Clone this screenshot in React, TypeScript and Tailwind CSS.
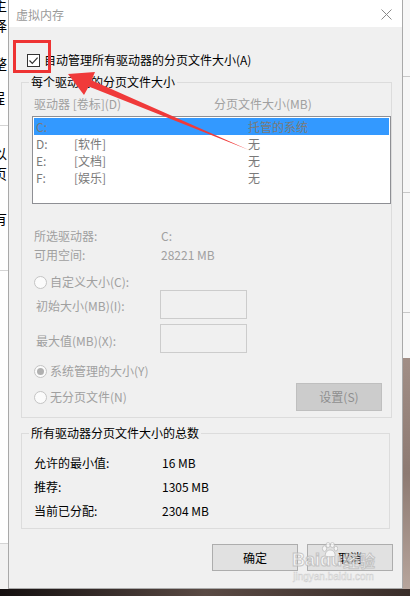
import React from "react";

const font = "font-['Noto_Sans_CJK_SC','Microsoft_YaHei',sans-serif]";

const drives = [
  { letter: "C:", label: "", size: "托管的系统", selected: true },
  { letter: "D:", label: "[软件]", size: "无", selected: false },
  { letter: "E:", label: "[文档]", size: "无", selected: false },
  { letter: "F:", label: "[娱乐]", size: "无", selected: false },
];

const totals = [
  { label: "允许的最小值:", value: "16 MB" },
  { label: "推荐:", value: "1305 MB" },
  { label: "当前已分配:", value: "2304 MB" },
];

const Radio: React.FC<{ checked?: boolean; label: string }> = ({ checked, label }) => (
  <div className="flex items-center h-[16px]">
    <span className="w-[13px] h-[13px] rounded-full border border-[#c4c4c4] bg-[#fbfbfb] flex items-center justify-center">
      {checked && <span className="w-[7px] h-[7px] rounded-full bg-[#b0b0b0]" />}
    </span>
    <span className="ml-[3px] text-[#a0a0a0]">{label}</span>
  </div>
);

const GroupBox: React.FC<{ title: string; className?: string; children: React.ReactNode }> = ({
  title,
  className,
  children,
}) => (
  <fieldset className={`border border-[#dcdcdc] ${className ?? ""}`}>
    <legend className="ml-[7px] px-[2px] leading-[16px] text-black">{title}</legend>
    {children}
  </fieldset>
);

const VirtualMemory: React.FC = () => {
  return (
    <div className="w-[395px] h-[589px] shrink-0 bg-[#f0f0f0] border-x border-b border-[#a9a9a9] flex flex-col">
      {/* title bar */}
      <div className="h-[27px] bg-white flex items-center justify-between pl-[7px] pr-[10px]">
        <span className="text-[12px] leading-[16px] text-[#9a9a9a] mt-[2px]">虚拟内存</span>
        <svg width="11" height="11" viewBox="0 0 11 11" className="mt-[1px]">
          <path d="M0.5 0.5 L10.5 10.5 M10.5 0.5 L0.5 10.5" stroke="#8a8a8a" strokeWidth="1" />
        </svg>
      </div>

      <div className="px-[12px] text-[12px] leading-[16px]">
        {/* auto manage checkbox */}
        <div className="mt-[25px] h-[16px] pl-[6px] flex items-center">
          <span className="w-[13px] h-[13px] border border-[#333333] bg-white flex items-center justify-center">
            <svg width="11" height="11" viewBox="0 0 11 11">
              <path d="M1.5 5.5 L4.3 8.3 L9.6 2.6" fill="none" stroke="#333333" strokeWidth="1.2" />
            </svg>
          </span>
          <span className="ml-[4px] text-black">自动管理所有驱动器的分页文件大小(A)</span>
        </div>

        <GroupBox title="每个驱动器的分页文件大小" className="mt-[6px] pb-[6px]">
          <div className="mt-[6px] h-[16px] flex text-[#a0a0a0]">
            <span className="ml-[12px] w-[180px]">驱动器 [卷标](D)</span>
            <span>分页文件大小(MB)</span>
          </div>
          <div className="mt-[4px] ml-[10px] w-[359px] h-[88px] border border-[#8e8f94] bg-white p-[1px]">
            {drives.map((d) => (
              <div
                key={d.letter}
                className={`h-[17px] flex items-center text-[#7a7a7a] ${d.selected ? "bg-[#3399ff]" : ""}`}
              >
                <span className="ml-[2px] w-[38px]">{d.letter}</span>
                <span className="w-[174px]">{d.label}</span>
                <span>{d.size}</span>
              </div>
            ))}
          </div>

          <div className="mt-[24px] h-[16px] flex text-[#a0a0a0]">
            <span className="ml-[12px] w-[127px]">所选驱动器:</span>
            <span>C:</span>
          </div>
          <div className="mt-[3px] h-[16px] flex text-[#a0a0a0]">
            <span className="ml-[12px] w-[127px]">可用空间:</span>
            <span>28221 MB</span>
          </div>

          <div className="mt-[11px] ml-[12px]">
            <Radio label="自定义大小(C):" />
          </div>
          <div className="flex items-center text-[#a0a0a0]">
            <span className="ml-[14px] w-[124px] mt-[2px]">初始大小(MB)(I):</span>
            <div className="w-[87px] h-[29px] border border-[#cccccc] bg-[#f0f0f0]" />
          </div>
          <div className="mt-[5px] flex items-center text-[#a0a0a0]">
            <span className="ml-[14px] w-[124px] mt-[4px]">最大值(MB)(X):</span>
            <div className="w-[87px] h-[29px] border border-[#cccccc] bg-[#f0f0f0]" />
          </div>

          <div className="mt-[10px] ml-[12px]">
            <Radio checked label="系统管理的大小(Y)" />
          </div>
          <div className="mt-[4px] h-[28px] flex items-center justify-between">
            <div className="ml-[12px]">
              <Radio label="无分页文件(N)" />
            </div>
            <div className="mr-[9px] w-[86px] h-[28px] bg-[#cccccc] border border-[#bfbfbf] flex items-center justify-center text-[#8f8f8f]">
              设置(S)
            </div>
          </div>
        </GroupBox>

        <GroupBox title="所有驱动器分页文件大小的总数" className="mt-[7px] pb-[9px]">
          {totals.map((t, i) => (
            <div key={t.label} className={`${i === 0 ? "mt-[14px]" : "mt-[8px]"} h-[16px] flex text-black`}>
              <span className="ml-[12px] w-[128px]">{t.label}</span>
              <span>{t.value}</span>
            </div>
          ))}
        </GroupBox>

        <div className="mt-[15px] -mr-[3px] flex justify-end gap-[9px]">
          <div className="w-[86px] h-[27px] bg-[#e1e1e1] border border-[#adadad] flex items-center justify-center text-black">
            确定
          </div>
          <div className="w-[86px] h-[27px] bg-[#e1e1e1] border border-[#adadad] flex items-center justify-center text-black">
            取消
          </div>
        </div>
      </div>
    </div>
  );
};

// window behind the dialog, only its right edge peeks out
const LeftEdge: React.FC = () => (
  <div className="w-[8px] h-[589px] shrink-0 overflow-hidden bg-white text-[14px] leading-[14px] text-black">
    <div className="-ml-[7px] -mt-[2px] h-[14px]">主</div>
    <div className="-ml-[7px] mt-[6px] h-[14px]">择</div>
    <div className="-ml-[7px] mt-[24px] h-[14px]">整</div>
    <div className="-ml-[9px] mt-[20px] h-[14px]">程</div>
    <div className="mt-[21px] h-px bg-[#d4d4d4]" />
    <div className="-ml-[7px] mt-[20px] h-[14px]">以</div>
    <div className="-ml-[7px] mt-[6px] h-[14px]">页</div>
    <div className="-ml-[7px] mt-[31px] h-[14px]">有</div>
    <div className="mt-[45px] h-px bg-[#d4d4d4]" />
    <div className="mt-[272px] h-px bg-[#d4d4d4]" />
    <div className="h-[60px] bg-[#f2f2f2]" />
  </div>
);

const RightEdge: React.FC = () => (
  <div className="w-[7px] h-[589px] shrink-0 flex flex-col">
    <div className="h-[358px] bg-[#f7f7f7] flex flex-col">
      <div className="mt-[76px] h-px bg-[#c8c8c8]" />
      <div className="mt-[115px] h-px bg-[#c8c8c8]" />
      <div className="mt-[119px] h-px bg-[#c8c8c8]" />
    </div>
    <div className="flex-1 bg-gradient-to-b from-[#a18e86] via-[#8d7a72] to-[#b7a59c]" />
  </div>
);

const BaiduMark: React.FC = () => (
  <div className="absolute left-[292px] top-[545px] flex flex-col items-center opacity-70 pointer-events-none">
    <div className="flex items-end h-[24px] font-['Liberation_Sans','Noto_Sans_CJK_SC',sans-serif] text-[18px] leading-[18px] font-bold text-white [-webkit-text-stroke:1px_#b8b8b8]">
      <span>Bai</span>
      <span className="relative">
        du
        <svg width="17" height="16" viewBox="0 0 24 22" className="absolute -top-[9px] left-[1px]">
          <g fill="#ffffff" stroke="#b8b8b8" strokeWidth="1.4">
            <ellipse cx="5" cy="9" rx="3" ry="4" />
            <ellipse cx="10" cy="4" rx="3" ry="3.5" />
            <ellipse cx="16" cy="4" rx="3" ry="3.5" />
            <ellipse cx="21" cy="9" rx="2.5" ry="3.5" />
            <path d="M6 19 C6 13 10 11 13 11 C16 11 20 13 20 19 C20 21 6 21 6 19 Z" />
          </g>
        </svg>
      </span>
      <span className="ml-[1px] text-[16px] font-['Noto_Sans_CJK_SC',sans-serif]">经验</span>
    </div>
    <div className="mt-[2px] text-[10px] leading-[11px] text-white [-webkit-text-stroke:0.5px_#c0c0c0] font-['Liberation_Sans',sans-serif]">
      jingyan.baidu.com
    </div>
  </div>
);

// red callout: box around the checkbox and an arrow pointing to it
const Callout: React.FC = () => (
  <>
    <div className="absolute left-[13px] top-[40px] w-[38px] h-[33px] border-[3px] border-[#ee3333]" />
    <svg className="absolute left-0 top-0 pointer-events-none" width="410" height="596" viewBox="0 0 410 596">
      <polygon
        points="68,74 95,72 91.5,80.2 249,150 88.7,86.4 84,95"
        fill="#f03a3a"
      />
    </svg>
  </>
);

export default function App() {
  return (
    <div className={`relative w-[410px] h-[596px] overflow-hidden bg-[#2a221f] ${font}`}>
      <div className="flex">
        <LeftEdge />
        <VirtualMemory />
        <RightEdge />
      </div>
      <div className="h-[7px] bg-gradient-to-r from-[#151010] via-[#5a4a44] to-[#3a2e2a]" />
      <Callout />
      <BaiduMark />
    </div>
  );
}
